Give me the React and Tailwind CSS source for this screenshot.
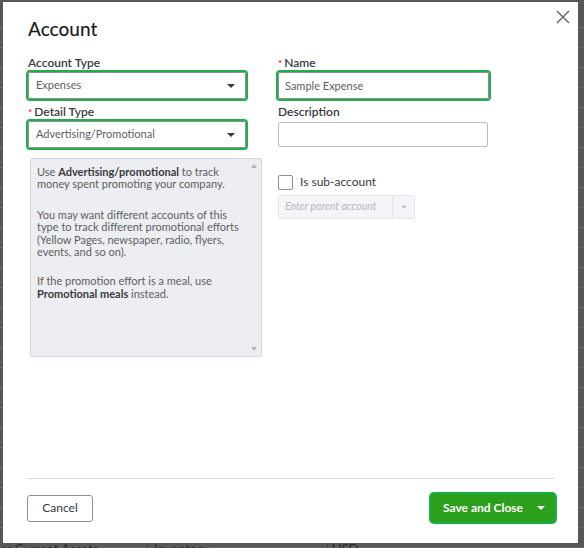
import { useState } from "react";

const FONT = { fontFamily: "Lato, 'Open Sans', Arial, sans-serif" };

// background table rows peeking from under the modal
const rows = Array.from({ length: 27 });

function Caret({ className = "" }) {
  return (
    <svg width="8" height="4" viewBox="0 0 8 4" className={className}>
      <path d="M0 0h8L4 4z" fill="currentColor" />
    </svg>
  );
}

function Required() {
  return <span className="text-[#d52b1e] text-[10px] mr-[2px] align-top">*</span>;
}

export default function App() {
  const [name, setName] = useState("Sample Expense");
  const [desc, setDesc] = useState("");
  const [isSub, setIsSub] = useState(false);

  return (
    <div
      className="relative w-[584px] h-[548px] bg-[#575757] overflow-hidden"
      style={FONT}
    >
      {/* page behind the overlay */}
      <div className="flex flex-col pt-[8px]">
        {rows.map((_, i) => (
          <div key={i} className="h-[20px] border-b border-[#6a6a6a]" />
        ))}
      </div>
      <div className="absolute left-0 top-[541px] w-full flex text-[13px] text-[#2a2a2a] leading-[16px]">
        <div className="w-[148px] border-r border-[#444]">er Current Assets</div>
        <div className="w-[180px] pl-[6px] border-r border-[#444]">Inventory</div>
        <div className="pl-[4px]">USD</div>
      </div>

      {/* modal */}
      <div className="absolute left-[3px] top-[2px] w-[575px] h-[541px] bg-white flex flex-col">
        <button className="absolute right-[8px] top-[8px] text-[#6b6c72]">
          <svg width="14" height="14" viewBox="0 0 14 14">
            <path d="M1 1l12 12M13 1L1 13" stroke="currentColor" strokeWidth="1.5" />
          </svg>
        </button>

        <h1 className="pl-[25px] pt-[15px] text-[19px] leading-[24px] text-[#1c1c1c] font-medium">
          Account
        </h1>

        <div className="flex pl-[25px] pt-[15px]">
          {/* left column */}
          <div className="w-[234px] flex flex-col">
            <label className="text-[12px] leading-[14px] text-[#393a3d] font-semibold">
              Account Type
            </label>
            <div className="mt-[2px] w-[218px] h-[27px] border border-[#8d9096] rounded-[2px] ring-2 ring-[#20ad4b] flex items-center justify-between pl-[7px] pr-[10px] text-[11px] text-[#5c5e62]">
              <span>Expenses</span>
              <Caret className="text-[#393a3d]" />
            </div>

            <label className="mt-[6px] text-[12px] leading-[14px] text-[#393a3d] font-semibold">
              <Required />
              Detail Type
            </label>
            <div className="mt-[2px] w-[218px] h-[27px] border border-[#8d9096] rounded-[2px] ring-2 ring-[#20ad4b] flex items-center justify-between pl-[7px] pr-[10px] text-[11px] text-[#5c5e62]">
              <span>Advertising/Promotional</span>
              <Caret className="text-[#393a3d]" />
            </div>

            <div className="relative mt-[10px] ml-[2px] w-[232px] h-[199px] bg-[#eceef1] border border-[#d4d7dc] rounded-[2px] pl-[6px] pt-[7px] text-[11px] leading-[12.4px] text-[#5c5e62]">
              <p className="mb-[18px]">
                <span className="block">
                  Use <b className="text-[#393a3d]">Advertising/promotional</b> to track
                </span>
                <span className="block">money spent promoting your company.</span>
              </p>
              <p className="mb-[17px]">
                <span className="block">You may want different accounts of this</span>
                <span className="block">type to track different promotional efforts</span>
                <span className="block">(Yellow Pages, newspaper, radio, flyers,</span>
                <span className="block">events, and so on).</span>
              </p>
              <p>
                <span className="block">If the promotion effort is a meal, use</span>
                <span className="block">
                  <b className="text-[#393a3d]">Promotional meals</b> instead.
                </span>
              </p>
              <div className="absolute right-[4px] top-[5px] w-0 h-0 border-x-[3px] border-x-transparent border-b-[4px] border-b-[#b5b7bb]" />
              <div className="absolute right-[4px] bottom-[5px] w-0 h-0 border-x-[3px] border-x-transparent border-t-[4px] border-t-[#b5b7bb]" />
            </div>
          </div>

          {/* right column */}
          <div className="ml-[16px] flex flex-col">
            <label className="text-[12px] leading-[14px] text-[#393a3d] font-semibold">
              <Required />
              Name
            </label>
            <input
              value={name}
              onChange={(e) => setName(e.target.value)}
              className="mt-[2px] w-[211px] h-[27px] border border-[#8d9096] rounded-[2px] ring-2 ring-[#20ad4b] outline-none px-[6px] text-[11px] text-[#5c5e62]"
            />

            <label className="mt-[6px] text-[12px] leading-[14px] text-[#393a3d] font-semibold">
              Description
            </label>
            <input
              value={desc}
              onChange={(e) => setDesc(e.target.value)}
              className="mt-[3px] w-[210px] h-[25px] border border-[#babec5] rounded-[2px] outline-none px-[6px] text-[11px]"
            />

            <label className="mt-[26px] flex items-center gap-[7px] text-[12px] text-[#393a3d] cursor-pointer">
              <span
                onClick={() => setIsSub(!isSub)}
                className="w-[15px] h-[15px] border border-[#8d9096] rounded-[2px] bg-white"
              />
              Is sub-account
            </label>

            <div className="mt-[4px] w-[137px] h-[24px] flex border border-[#e3e5e8] bg-[#f4f5f8] rounded-[2px] text-[10.5px] italic text-[#b5b8bd]">
              <span className="flex-1 flex items-center pl-[6px]">Enter parent account</span>
              <span className="w-[22px] border-l border-[#e3e5e8] flex items-center justify-center">
                <Caret className="text-[#b5b8bd] scale-75" />
              </span>
            </div>
          </div>
        </div>

        {/* footer */}
        <div className="mt-auto mx-[24px] border-t border-[#dcdcdc] pt-[15px] pb-[21px] flex items-center justify-between">
          <button className="w-[66px] h-[27px] border border-[#8d9096] rounded-[3px] text-[12px] text-[#393a3d]">
            Cancel
          </button>
          <div className="mr-[-1px] flex items-center w-[124px] h-[28px] bg-[#2ca01c] rounded-[3px] ring-2 ring-[#14b34a] text-white">
            <button className="flex-1 text-left pl-[12px] text-[12px] font-bold">Save and Close</button>
            <Caret className="mr-[10px] text-white" />
          </div>
        </div>
      </div>
    </div>
  );
}
